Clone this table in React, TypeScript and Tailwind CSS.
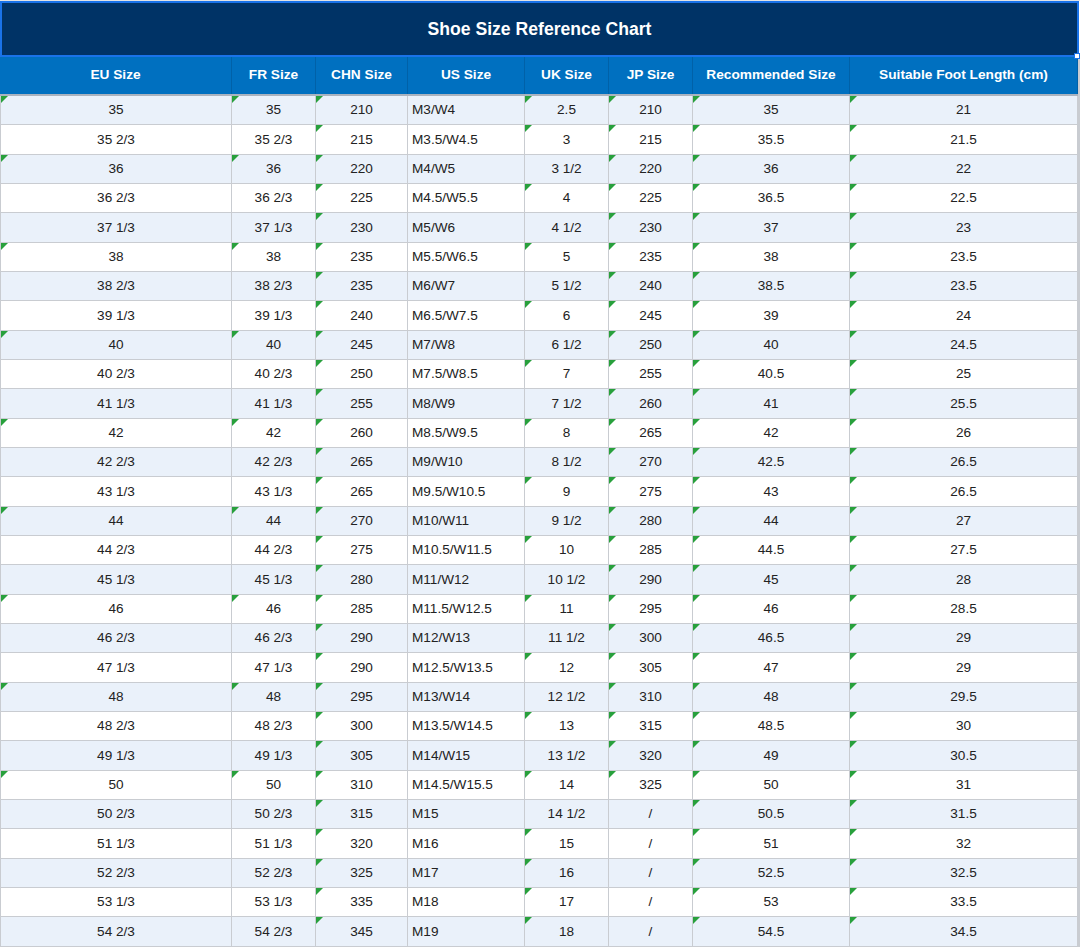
import React from 'react';

type Row = [string, string, string, string, string, string, string, string];

const headers = [
  'EU Size',
  'FR Size',
  'CHN Size',
  'US Size',
  'UK Size',
  'JP Size',
  'Recommended Size',
  'Suitable Foot Length (cm)',
];

const rows: Row[] = [
  ['35', '35', '210', 'M3/W4', '2.5', '210', '35', '21'],
  ['35 2/3', '35 2/3', '215', 'M3.5/W4.5', '3', '215', '35.5', '21.5'],
  ['36', '36', '220', 'M4/W5', '3 1/2', '220', '36', '22'],
  ['36 2/3', '36 2/3', '225', 'M4.5/W5.5', '4', '225', '36.5', '22.5'],
  ['37 1/3', '37 1/3', '230', 'M5/W6', '4 1/2', '230', '37', '23'],
  ['38', '38', '235', 'M5.5/W6.5', '5', '235', '38', '23.5'],
  ['38 2/3', '38 2/3', '235', 'M6/W7', '5 1/2', '240', '38.5', '23.5'],
  ['39 1/3', '39 1/3', '240', 'M6.5/W7.5', '6', '245', '39', '24'],
  ['40', '40', '245', 'M7/W8', '6 1/2', '250', '40', '24.5'],
  ['40 2/3', '40 2/3', '250', 'M7.5/W8.5', '7', '255', '40.5', '25'],
  ['41 1/3', '41 1/3', '255', 'M8/W9', '7 1/2', '260', '41', '25.5'],
  ['42', '42', '260', 'M8.5/W9.5', '8', '265', '42', '26'],
  ['42 2/3', '42 2/3', '265', 'M9/W10', '8 1/2', '270', '42.5', '26.5'],
  ['43 1/3', '43 1/3', '265', 'M9.5/W10.5', '9', '275', '43', '26.5'],
  ['44', '44', '270', 'M10/W11', '9 1/2', '280', '44', '27'],
  ['44 2/3', '44 2/3', '275', 'M10.5/W11.5', '10', '285', '44.5', '27.5'],
  ['45 1/3', '45 1/3', '280', 'M11/W12', '10 1/2', '290', '45', '28'],
  ['46', '46', '285', 'M11.5/W12.5', '11', '295', '46', '28.5'],
  ['46 2/3', '46 2/3', '290', 'M12/W13', '11 1/2', '300', '46.5', '29'],
  ['47 1/3', '47 1/3', '290', 'M12.5/W13.5', '12', '305', '47', '29'],
  ['48', '48', '295', 'M13/W14', '12 1/2', '310', '48', '29.5'],
  ['48 2/3', '48 2/3', '300', 'M13.5/W14.5', '13', '315', '48.5', '30'],
  ['49 1/3', '49 1/3', '305', 'M14/W15', '13 1/2', '320', '49', '30.5'],
  ['50', '50', '310', 'M14.5/W15.5', '14', '325', '50', '31'],
  ['50 2/3', '50 2/3', '315', 'M15', '14 1/2', '/', '50.5', '31.5'],
  ['51 1/3', '51 1/3', '320', 'M16', '15', '/', '51', '32'],
  ['52 2/3', '52 2/3', '325', 'M17', '16', '/', '52.5', '32.5'],
  ['53 1/3', '53 1/3', '335', 'M18', '17', '/', '53', '33.5'],
  ['54 2/3', '54 2/3', '345', 'M19', '18', '/', '54.5', '34.5'],
];

// numbers typed into the sheet as text get the little green corner
const isPlainNumber = (v: string) => /^\d+(\.\d+)?$/.test(v);

function Cell({ value, col }: { value: string; col: number }) {
  const isUs = col === 3;
  return (
    <div
      className={`relative flex items-center border-r border-b border-[#c9ccd1] ${
        isUs ? 'justify-start pl-[4px]' : 'justify-center'
      } ${col === 0 ? 'border-l' : ''}`}
    >
      {!isUs && isPlainNumber(value) && (
        <span className="absolute top-0 left-0 h-0 w-0 border-t-[7px] border-r-[7px] border-t-[#28a03c] border-r-transparent" />
      )}
      <span className="pt-px">{value}</span>
    </div>
  );
}

export default function App() {
  return (
    <div className="w-[1080px] h-[949px] overflow-hidden bg-white font-['Liberation_Sans',Arial,sans-serif] text-[13.6px] text-[#222222]">
      <div className="h-px bg-[#e3e3e3]" />

      {/* Title */}
      <div className="relative w-[1079px] h-[56px] border-2 border-[#1a73e8] bg-[#003366] flex items-center justify-center">
        <h1 className="text-[17.6px] font-bold text-white">Shoe Size Reference Chart</h1>
        <span className="absolute -right-[3px] -bottom-[4px] h-[6px] w-[6px] border border-[#1a73e8] bg-white" />
      </div>

      <div className="w-[1080px] border-r-2 border-[#c9ccd1]">
        {/* Header */}
        <div className="grid grid-cols-[232px_84px_92px_117px_84px_84px_157px_228px] h-[39px] bg-[#0070c0] border-b-2 border-[#aab3bf]">
          {headers.map((h) => (
            <div
              key={h}
              className="flex items-center justify-center border-r border-[#0061a8] text-[13.7px] font-bold text-white"
            >
              {h}
            </div>
          ))}
        </div>

        {/* Body */}
        {rows.map((row, i) => (
          <div
            key={i}
            className={`grid grid-cols-[232px_84px_92px_117px_84px_84px_157px_228px] h-[29.33px] ${
              i % 2 === 0 ? 'bg-[#eaf1fa]' : 'bg-white'
            }`}
          >
            {row.map((v, c) => (
              <Cell key={c} value={v} col={c} />
            ))}
          </div>
        ))}
      </div>
    </div>
  );
}
